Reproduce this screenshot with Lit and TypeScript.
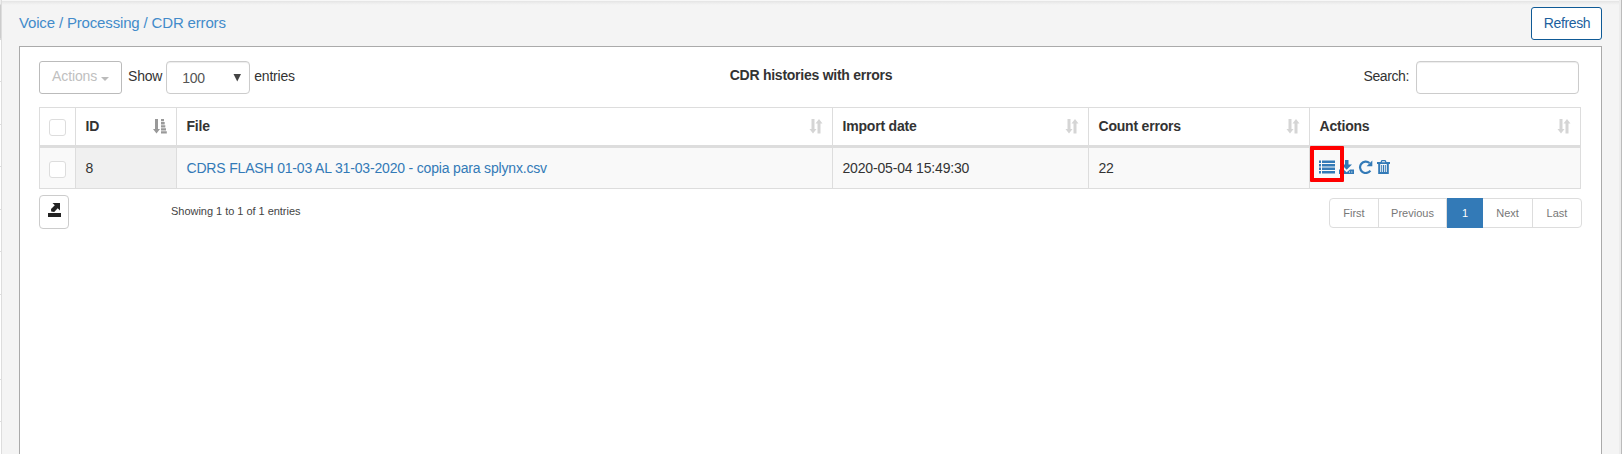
import { LitElement, html, css, svg } from "lit";
import { customElement } from "lit/decorators.js";

const sortIcon = svg`<path d="M2.500 0h3v10H7.500L4 14.400.500 10H2.500zM8.500 14.400h3V4.400H13.500L10 0 6.500 4.400H8.500z"/>`;
const sortedIcon = svg`<path d="M2 0h3v10h2L3.500 14.400 0 10h2zM8 0h3v2.300H8zM8 3.100h3.700v2.300H8zM8 6.200h4.300v2.300H8zM8 9.300h5v2.300H8zM8 12.300h5.800v2.300H8z"/>`;

interface Column { label: string; cls: string; sorted?: boolean }
const columns: Column[] = [
  { label: "ID", cls: "w-id", sorted: true },
  { label: "File", cls: "w-file" },
  { label: "Import date", cls: "w-date" },
  { label: "Count errors", cls: "w-count" },
  { label: "Actions", cls: "w-act" },
];

@customElement("app-root")
export class AppRoot extends LitElement {
  static styles = css`
    :host { display: block; height: 454px; overflow: hidden; background: #f4f4f4;
      font: 14px/20px "Liberation Sans", Arial, sans-serif; color: #333; }
    * { box-sizing: border-box; }
    .frame { display: flex; height: 454px; border-right: 1px solid #bbb; }
    .rail { width: 2px; flex: none; border-right: 1px solid #ddd;
      background: linear-gradient(#eee 4px, #ccc 5px, #ccc 38px, transparent 40px),
        repeating-linear-gradient(#fff 0 39px, #ddd 39px 40px, #fff 40px 42.500px); }
    .edge { width: 2px; flex: none; background: #ececec; }
    .page { flex: 1; padding: 0 17px; display: flex; flex-direction: column;
      background: linear-gradient(#f7f7f7 1px, #e3e3e3 1px, #e9e9e9 2px, #f4f4f4 5px); }
    .top { height: 46px; flex: none; display: flex; justify-content: space-between; align-items: flex-start; padding-top: 7px; }
    .crumbs { color: #428bca; font-size: 15px; letter-spacing: -0.16px; padding: 6px 0 0; }
    .refresh { height: 33px; width: 71px; border: 1px solid #0f5a96; border-radius: 3px; background: #fff; color: #1c5f9e;
      font: inherit; letter-spacing: -0.38px; padding: 0 0 1px 1px; }
    .panel { flex: none; height: 420px; background: #fff; border: 1px solid #aaa; padding: 14px 20px 0 19px; }
    .tools { display: grid; grid-template-columns: 1fr auto 1fr; height: 33px; align-items: center; }
    .left { display: flex; align-items: center; }
    .menu { width: 83px; height: 33px; border: 1px solid #bbb; border-radius: 3px; background: #fff; color: #c0c0c0; font: inherit;
      padding: 0 0 3px 12px; display: flex; align-items: center; gap: 4px; letter-spacing: -0.1px; }
    .caret { border: 4.500px solid transparent; border-top-color: #bbb; border-bottom: 0; margin-top: 6px; }
    .show { margin: 0 4px 3px 6px; letter-spacing: -0.2px; }
    .select { width: 84px; height: 33px; border: 1px solid #ccc; border-radius: 4px; box-shadow: inset 0 1px 1px #00000013;
      display: flex; align-items: center; justify-content: space-between; padding: 0 8px 0 15px; color: #555; }
    .num { letter-spacing: -0.3px; }
    .entries { margin: 0 0 3px 4px; letter-spacing: -0.2px; }
    .title { font-weight: bold; letter-spacing: -0.25px; padding: 0 0 5px 2px; }
    .search { display: flex; justify-content: flex-end; align-items: center; gap: 7px; padding-right: 2px; letter-spacing: -0.4px; }
    .search > span { padding-bottom: 3px; }
    .input { width: 163px; height: 33px; border: 1px solid #ccc; border-radius: 4px; box-shadow: inset 0 1px 1px #00000013; }
    .grid { margin-top: 13px; border: 1px solid #ddd; }
    .row { display: flex; }
    .row > div { border-right: 1px solid #ddd; padding-left: 9.500px; display: flex; align-items: center; height: 40px; }
    .row > div:last-child { border-right: 0; }
    .head { border-bottom: 3px solid #ddd; font-weight: bold; letter-spacing: -0.2px; }
    .head > div { height: 37px; justify-content: space-between; padding-right: 9px; }
    .head span { padding-bottom: 1px; }
    .body { background: #f9f9f9; letter-spacing: -0.175px; }
    .row > .w-check { width: 36px; padding: 3px 0 0 9px; justify-content: flex-start; }
    .head > .w-check { padding-top: 2px; }
    .w-id { width: 101px; } .w-file { width: 656px; } .w-date { width: 256px; } .w-count { width: 221px; } .w-act { flex: 1; }
    .body > .w-id { background: #f0f0f0; }
    .check { width: 17px; height: 17px; border: 1px solid #ddd; border-radius: 3px; background: #fff; }
    .sort { width: 14px; height: 15px; fill: #d5d5d5; }
    .sorted { fill: #999; }
    .link { color: #337ab7; }
    .body > .icons { position: relative; gap: 4px; padding: 0 0 2px 9px; fill: #337ab7; }
    .mark { position: absolute; left: 0; top: -2px; width: 34px; height: 36px; border: 4px solid #ff0000; border-radius: 1px; }
    .foot { display: flex; align-items: flex-start; padding-top: 6px; margin-right: -1px; }
    .export { width: 30px; height: 34px; border: 1px solid #ccc; border-radius: 4px; background: #fff; padding: 0 0 2px; }
    .info { font-size: 11px; margin: 6px auto 0 102px; color: #444; letter-spacing: -0.03px; }
    .pages { display: flex; margin-top: 3px; height: 30px; border: 1px solid #ddd; border-radius: 4px; font-size: 11px; color: #777; width: 253px; }
    .pages > div { display: flex; align-items: center; justify-content: center; border-right: 1px solid #ddd; }
    .pages > div:last-child { border: 0; }
    .p1 { width: 49px; } .p2 { width: 68px; } .p4 { width: 50px; } .p5 { flex: 1; }
    .pages > .p3 { width: 36px; background: #337ab7; color: #fff; margin: -1px 0; border: 0; }
  `;

  render() {
    return html`
      <div class="frame"><div class="rail"></div>
      <div class="page">
        <div class="top"><div class="crumbs"><span>Voice / Processing / CDR errors</span></div><button class="refresh">Refresh</button></div>
        <div class="panel">
          <div class="tools">
            <div class="left">
              <button class="menu"><span>Actions</span><i class="caret"></i></button>
              <span class="show">Show</span>
              <div class="select"><span class="num">100</span><svg width="8" height="8" fill="#444"><path d="M.500 0H8L4.250 7.500z"/></svg></div>
              <span class="entries">entries</span>
            </div>
            <span class="title">CDR histories with errors</span>
            <div class="search"><span>Search:</span><div class="input"></div></div>
          </div>
          <div class="grid">
            <div class="row head">
              <div class="w-check"><i class="check"></i></div>
              ${columns.map((c) => html`<div class=${c.cls}><span>${c.label}</span>
                <svg class="sort ${c.sorted ? "sorted" : ""}" viewBox="0 0 14 15">${c.sorted ? sortedIcon : sortIcon}</svg></div>`)}
            </div>
            <div class="row body">
              <div class="w-check"><i class="check"></i></div>
              <div class="w-id">8</div>
              <div class="w-file"><span class="link">CDRS FLASH 01-03 AL 31-03-2020 - copia para splynx.csv</span></div>
              <div class="w-date"><span>2020-05-04 15:49:30</span></div>
              <div class="w-count">22</div>
              <div class="w-act icons">
                <svg width="16" height="14"><path d="M0 .500h2v2.400H0zM3 .500h13v2.400H3zM0 4h2v2.400H0zM3 4h13v2.400H3zM0 7.500h2v2.400H0zM3 7.500h13v2.400H3zM0 11h2v2.400H0zM3 11h13v2.400H3z"/></svg>
                <svg width="15" height="14"><path d="M6 0h3.500v4.500h3.500L7.700 9.800 2.500 4.500H6z"/><path d="M0 9.500h4.500l3.200 2.700L11 9.500h4V14H0z"/><path d="M10 11.500h1v1h-1zM12.300 11.500h1v1h-1z" fill="#f9f9f9"/></svg>
                <svg width="15" height="14"><path d="M12.400 10.600A5.700 5.700 0 1 1 11.500 3" fill="none" stroke="#337ab7" stroke-width="2.200"/><path d="M14.300.500v5.700H8.600z"/></svg>
                <svg width="13" height="14"><path d="M0 2h3.500L4.500 0h4l1 2H13v2H0zM5.300 1.200l-.500 1h3.400l-.500-1z" fill-rule="evenodd"/><path d="M2.200 3.500v9.500h8.600V3.500" fill="none" stroke="#337ab7" stroke-width="2"/><path d="M4.700 5v7M6.500 5v7M8.300 5v7" stroke="#337ab7" stroke-width="1"/></svg>
                <i class="mark"></i>
              </div>
            </div>
          </div>
          <div class="foot">
            <button class="export"><svg width="13" height="14" fill="#222"><path d="M0 10h13v4H0zM4.500 0H12v7.500L9.700 5.200 6.200 9 3.200 8.500 3 6 6.800 2.300z"/></svg></button>
            <span class="info">Showing 1 to 1 of 1 entries</span>
            <div class="pages"><div class="p1">First</div><div class="p2">Previous</div><div class="p3">1</div><div class="p4">Next</div><div class="p5">Last</div></div>
          </div>
        </div>
      </div><div class="edge"></div></div>`;
  }
}
